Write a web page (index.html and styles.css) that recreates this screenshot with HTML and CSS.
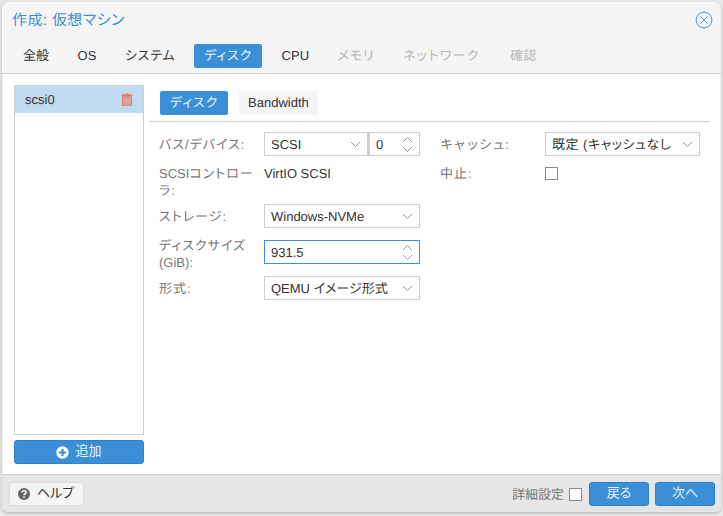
FILE: index.html
```html
<!DOCTYPE html>
<html lang="ja">
<head>
<meta charset="utf-8">
<title>作成: 仮想マシン</title>
<link rel="stylesheet" href="styles.css">
</head>
<body>
<div class="window">
  <header class="title-bar">
    <span class="title">作成: 仮想マシン</span>
    <svg class="close" width="18" height="18" viewBox="0 0 18 18"><circle cx="9" cy="9" r="7.9" fill="none" stroke="#4a96d6" stroke-width="1"/><path d="M5.4 5.4l7.2 7.2M12.6 5.4l-7.200 7.200" stroke="#4a96d6" stroke-width="1" fill="none"/></svg>
  </header>
  <nav class="tabs">
    <span class="tab">全般</span>
    <span class="tab">OS</span>
    <span class="tab kana">システム</span>
    <span class="tab kana active">ディスク</span>
    <span class="tab cpu">CPU</span>
    <span class="tab kana disabled">メモリ</span>
    <span class="tab wide disabled">ネットワーク</span>
    <span class="tab last disabled">確認</span>
  </nav>
  <main class="content">
    <aside class="side">
      <div class="disk-list">
        <div class="disk-row">
          <span>scsi0</span>
          <svg width="12" height="13" viewBox="0 0 12 13"><path d="M4.2 1.5V.6h3.6v.9H11.5v1.5H.5V1.5z" fill="#f4715f"/><path d="M1.4 3.8h9.2v8.3c0 .5-.3.8-.8.8H2.2c-.5 0-.8-.3-.8-.8z" fill="#d3a4a4" stroke="#f4715f" stroke-width="1"/></svg>
        </div>
      </div>
      <button class="btn add-btn">
        <svg width="13" height="13" viewBox="0 0 13 13"><circle cx="6.5" cy="6.5" r="6.2" fill="#fff"/><path d="M6.5 3v7M3 6.5h7" stroke="#3a8fd6" stroke-width="2.2"/></svg>
        <span>追加</span>
      </button>
    </aside>
    <section class="panel">
      <div class="subtabs">
        <span class="subtab kana active">ディスク</span>
        <span class="subtab">Bandwidth</span>
      </div>
      <div class="form">
        <div class="col">
          <div class="row">
            <label class="lbl">バス/デバイス:</label>
            <div class="pair">
              <div class="field grow"><span>SCSI</span><svg class="chev" width="11" height="7" viewBox="0 0 11 7"><path d="M1 1l4.500 4.500L10 1" fill="none" stroke="#999" stroke-width="1"/></svg></div>
              <div class="field small"><span>0</span><svg class="spin" width="11" height="17" viewBox="0 0 11 17"><path d="M1 6l4.500-4.500L10 6M1 11l4.500 4.500L10 11" fill="none" stroke="#999" stroke-width="1"/></svg></div>
            </div>
          </div>
          <div class="row">
            <label class="lbl two"><span class="latin">SCSI</span>コントロー<br>ラ:</label>
            <span class="val">VirtIO SCSI</span>
          </div>
          <div class="row">
            <label class="lbl">ストレージ:</label>
            <div class="field"><span>Windows-NVMe</span><svg class="chev" width="11" height="7" viewBox="0 0 11 7"><path d="M1 1l4.500 4.500L10 1" fill="none" stroke="#999" stroke-width="1"/></svg></div>
          </div>
          <div class="row">
            <label class="lbl two">ディスクサイズ<br><span class="latin">(GiB):</span></label>
            <div class="field focus"><span>931.5</span><svg class="spin" width="11" height="17" viewBox="0 0 11 17"><path d="M1 6l4.500-4.500L10 6M1 11l4.500 4.500L10 11" fill="none" stroke="#999" stroke-width="1"/></svg></div>
          </div>
          <div class="row">
            <label class="lbl">形式:</label>
            <div class="field"><span>QEMU イメージ形式</span><svg class="chev" width="11" height="7" viewBox="0 0 11 7"><path d="M1 1l4.500 4.500L10 1" fill="none" stroke="#999" stroke-width="1"/></svg></div>
          </div>
        </div>
        <div class="col">
          <div class="row">
            <label class="lbl full">キャッシュ:</label>
            <div class="field"><span class="spaced">既定 (キャッシュなし</span><svg class="chev" width="11" height="7" viewBox="0 0 11 7"><path d="M1 1l4.500 4.500L10 1" fill="none" stroke="#999" stroke-width="1"/></svg></div>
          </div>
          <div class="row">
            <label class="lbl two">中止:</label>
            <span class="check"></span>
          </div>
        </div>
      </div>
    </section>
  </main>
  <footer class="footer">
    <button class="help">
      <svg width="12" height="12" viewBox="0 0 12 12"><circle cx="6" cy="6" r="6" fill="#666"/><path d="M4 4.600C4 3.400 4.900 2.800 6 2.800S8 3.500 8 4.400c0 1.400-2 1.400-2 2.800" fill="none" stroke="#fff" stroke-width="1.500"/><rect x="5.200" y="8.200" width="1.600" height="1.500" fill="#fff"/></svg>
      <span>ヘルプ</span>
    </button>
    <div class="spacer"></div>
    <span class="adv">詳細設定</span>
    <span class="check adv-check"></span>
    <button class="btn foot-btn">戻る</button>
    <button class="btn foot-btn">次へ</button>
  </footer>
</div>
</body>
</html>
```

FILE: styles.css
```css
* { box-sizing: border-box; }
html, body { margin: 0; padding: 0; height: 516px; overflow: hidden; }
body {
  background: #e9e9e9;
  padding: 2px 2px 4px;
  font-family: "Liberation Sans", "Noto Sans CJK JP", sans-serif;
  font-size: 13px;
  color: #333;
  font-feature-settings: "palt";
  text-rendering: geometricPrecision;
}
.window {
  height: 510px;
  display: flex;
  flex-direction: column;
  background: #f5f5f5;
  border-radius: 6px;
  overflow: hidden;
  box-shadow: 0 1px 3px rgba(0,0,0,.25);
}
.title-bar {
  height: 35px;
  flex: none;
  display: flex;
  align-items: center;
  justify-content: space-between;
  padding: 0 8px 0 10px;
}
.title { font-size: 15px; color: #3a8fd6; letter-spacing: .4px; }
.tabs {
  height: 37px;
  flex: none;
  display: flex;
  align-items: flex-start;
  gap: 8.5px;
  padding: 7px 0 0 11px;
  border-bottom: 1px solid #cfcfcf;
}
.tab {
  height: 24px;
  padding: 0 10px;
  line-height: 24px;
  border-radius: 2px;
}
.kana { letter-spacing: .85px; }
.wide { letter-spacing: 1.35px; }
.cpu { margin-left: 1px; }
.last { margin-left: 2px; }
.tab.active { background: #3a8fd6; color: #eaf3fb; }
.tab.disabled { color: #b5b5b5; }
.content {
  flex: 1;
  min-height: 0;
  display: flex;
  margin: 0 1px;
  background: #fff;
  border-bottom: 1px solid #cfcfcf;
  padding: 11px 0 10px 11px;
}
.side {
  width: 130px;
  flex: none;
  display: flex;
  flex-direction: column;
  gap: 5px;
}
.disk-list {
  flex: 1;
  border: 1px solid #cfcfcf;
}
.disk-row {
  height: 27px;
  display: flex;
  align-items: center;
  justify-content: space-between;
  padding: 0 10px;
  background: #c0daf0;
}
.btn {
  font: inherit;
  line-height: 16px;
  height: 24px;
  border: 1px solid #2f82c9;
  border-radius: 3px;
  background: #3a8fd6;
  color: #eaf3fb;
  padding: 0 0 2px;
}
.add-btn {
  display: flex;
  align-items: center;
  justify-content: center;
  gap: 6px;
  padding: 0;
}
.add-btn span { position: relative; top: -1px; }
.panel { flex: 1; min-width: 0; padding-left: 5px; }
.subtabs {
  display: flex;
  gap: 11px;
  padding: 6px 0 6px 11px;
  margin-right: 10px;
  border-bottom: 1px solid #cfcfcf;
}
.subtab {
  height: 24px;
  line-height: 24px;
  padding: 0 9px;
  border-radius: 2px;
  background: #f5f5f5;
}
.subtab.active { background: #3a8fd6; color: #eaf3fb; padding: 0 10px; }
.form {
  display: flex;
  gap: 20px;
  padding: 10px 0 0 10px;
}
.col { width: 261px; display: flex; flex-direction: column; gap: 12px; }
.col + .col { width: 260px; }
.row { display: flex; align-items: flex-start; height: 24px; }
.lbl {
  width: 105px;
  flex: none;
  color: #767676;
  line-height: 26px;
  white-space: nowrap;
  letter-spacing: 1px;
}
.lbl.full { font-feature-settings: normal; letter-spacing: 0; }
.lbl.two { line-height: 17px; margin-top: -3px; }
.latin { letter-spacing: 0; }
.val { line-height: 11px; }
.pair { display: flex; flex: 1; }
.field {
  flex: 1;
  min-width: 0;
  height: 24px;
  line-height: 16px;
  display: flex;
  align-items: center;
  justify-content: space-between;
  border: 1px solid #cfcfcf;
  background: #fff;
  padding: 1px 6px 0;
  white-space: nowrap;
}
.spaced { letter-spacing: .5px; }
.pair .grow { width: 104px; flex: none; }
.pair .small { width: 52px; flex: none; border-left-width: 2px; }
.field.focus { border-color: #3a8fd6; }
.chev, .spin { flex: none; }
.check {
  width: 13px;
  height: 13px;
  border: 1px solid #8a8a8a;
  background: #fff;
  margin-top: -1px;
}
.footer {
  flex: none;
  height: 37px;
  display: flex;
  align-items: center;
  padding: 0 6px 0 7px;
  background: #e6e6e6;
}
.spacer { flex: 1; }
.help {
  font: inherit;
  line-height: 16px;
  color: #333;
  width: 75px;
  height: 24px;
  padding: 0 0 0 8px;
  display: flex;
  align-items: center;
  gap: 7px;
  background: #f5f5f5;
  border: 1px solid #dcdcdc;
  border-radius: 3px;
}
.help span { position: relative; top: -1px; }
.adv { color: #767676; margin-right: 5px; }
.adv-check { margin: 1px 7px 0 0; }
.foot-btn { width: 60px; }
.foot-btn + .foot-btn { margin-left: 6px; }
```
